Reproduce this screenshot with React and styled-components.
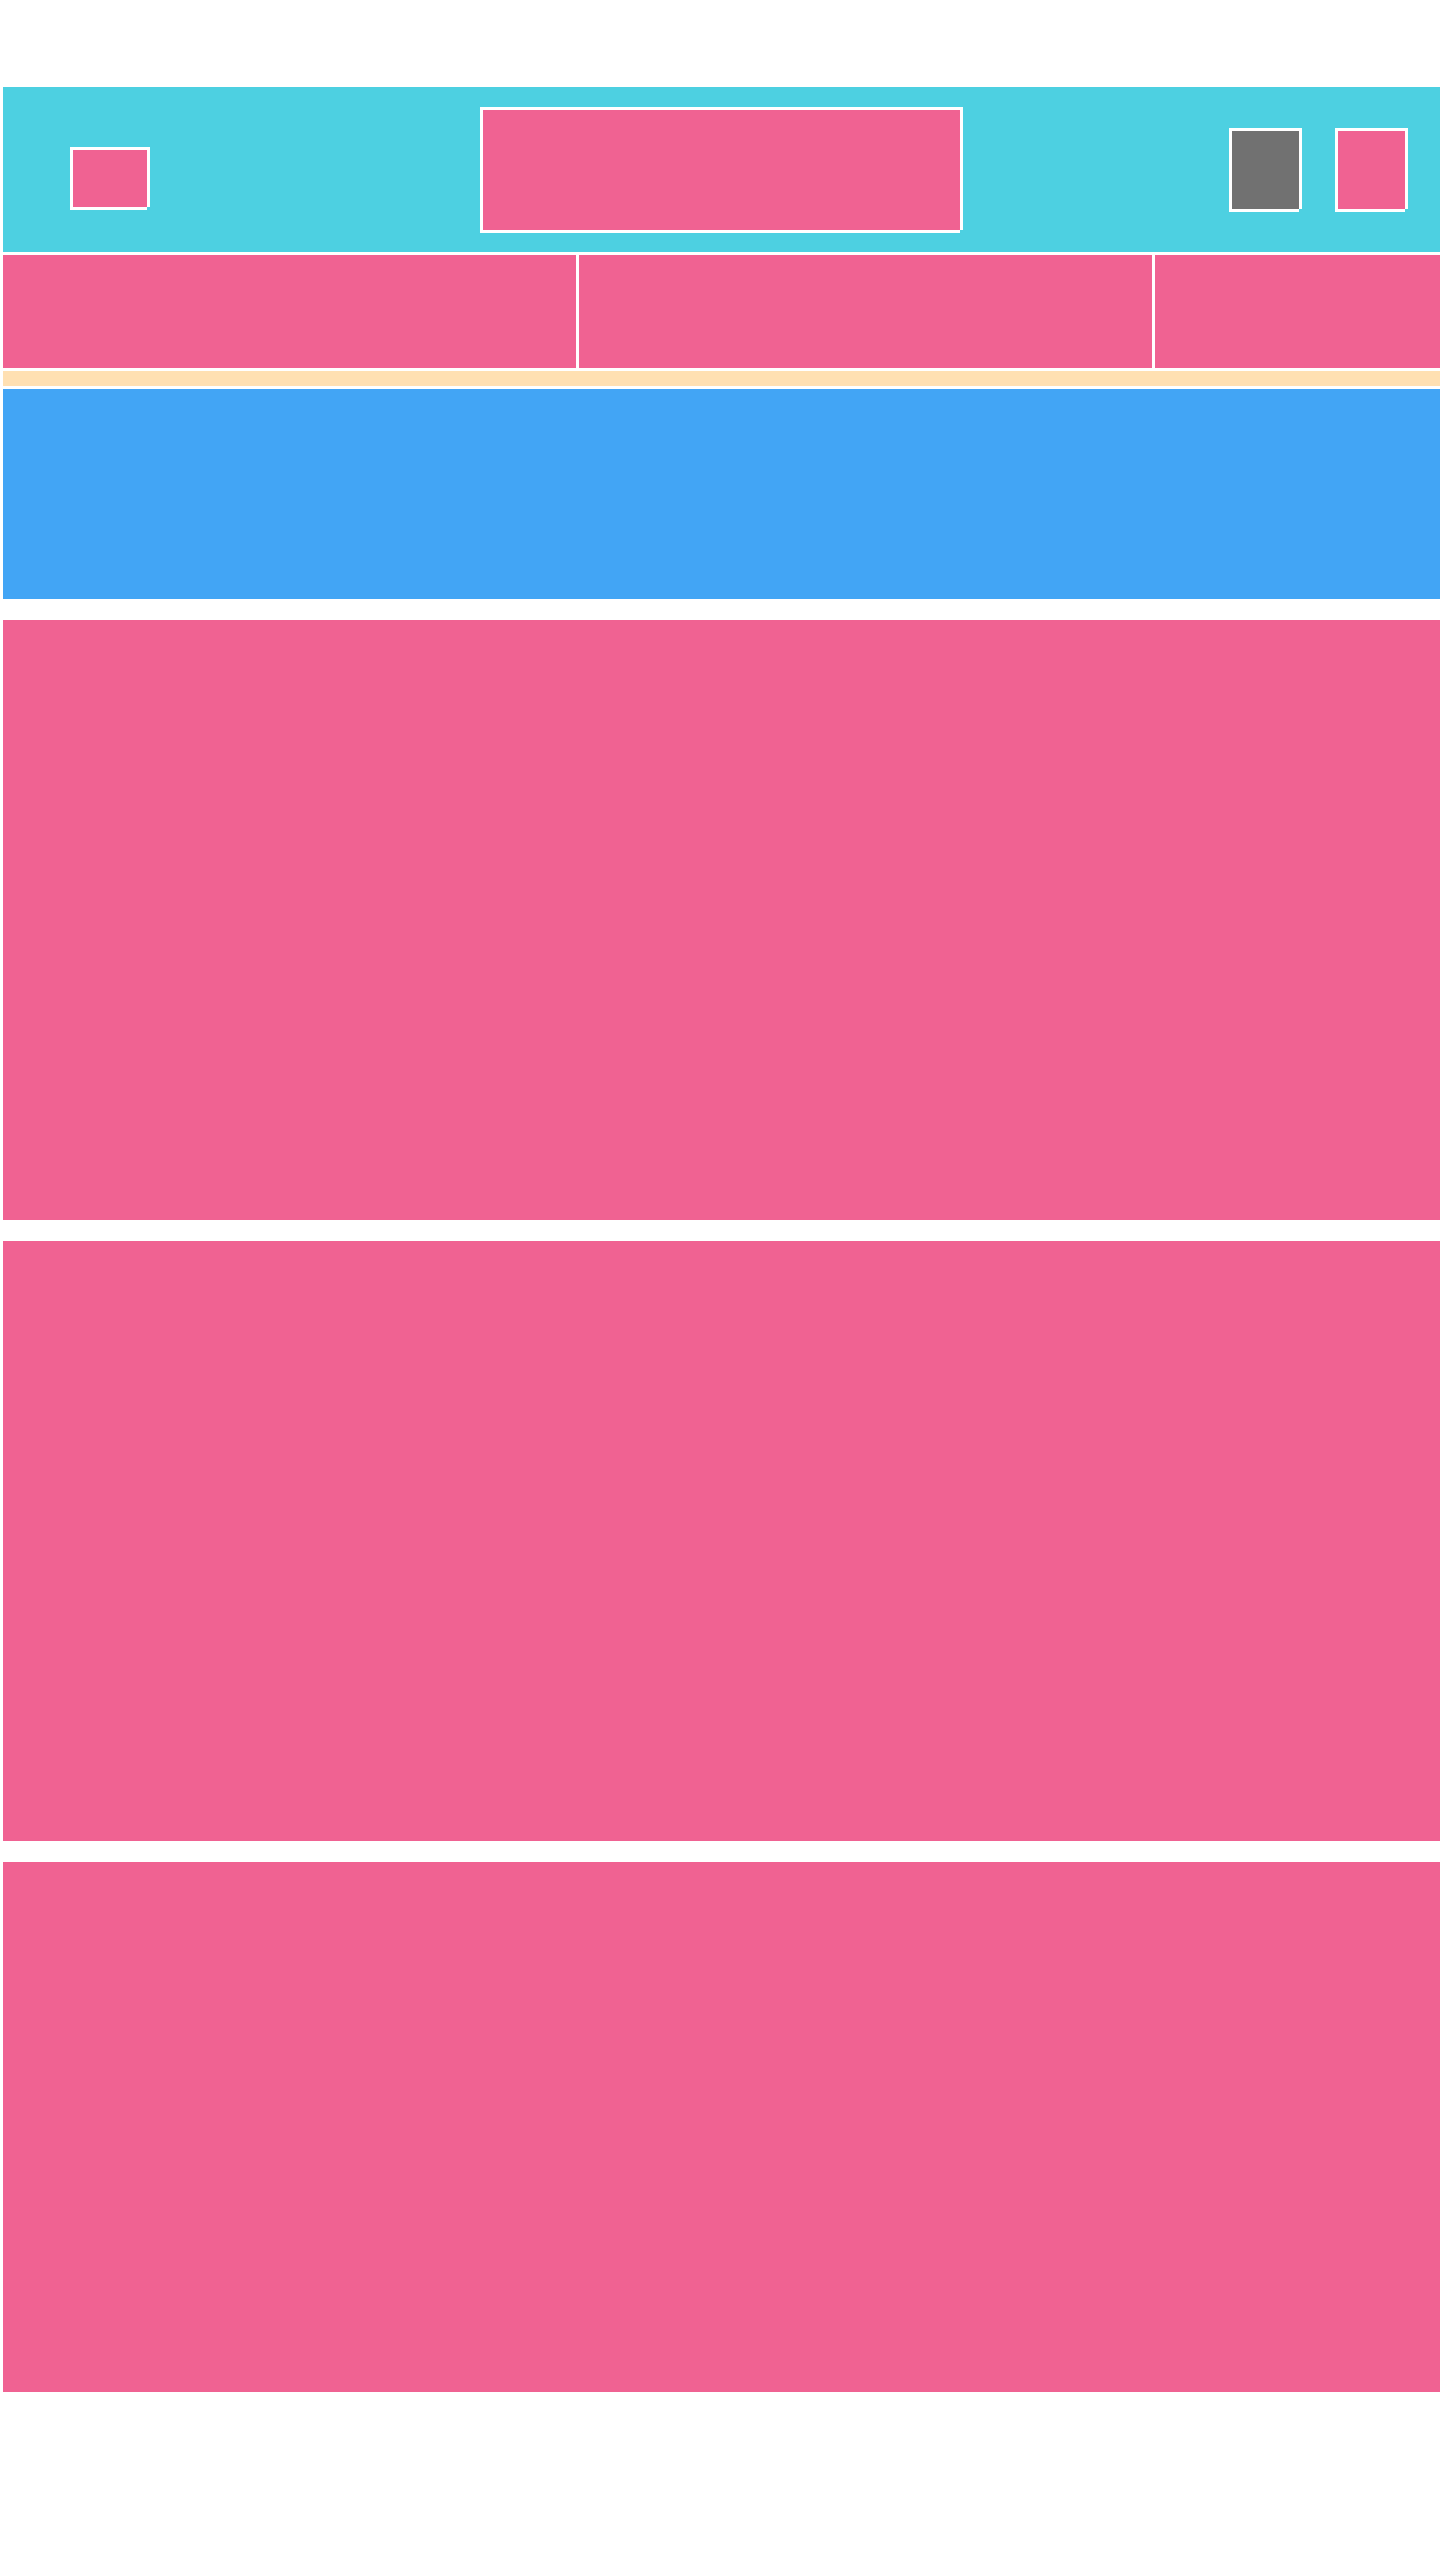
import React from "react";
import styled, { createGlobalStyle } from "styled-components";

const GlobalStyle = createGlobalStyle`
  html, body {
    margin: 0;
    padding: 0;
    background: #ffffff;
    font-family: "Liberation Sans", Arial, sans-serif;
    overflow-x: hidden;
  }
`;

const whiteFrame = `
  box-shadow:
    -3px -3px 0 0 #ffffff,
    3px -3px 0 0 #ffffff,
    -3px 3px 0 0 #ffffff,
    3px 0 0 0 #ffffff,
    0 3px 0 0 #ffffff;
`;

const Page = styled.div`
  width: 1437px;
  padding: 87px 0 0 3px;
  display: flex;
  flex-direction: column;
  overflow: hidden;
`;

const TopBar = styled.header`
  height: 165px;
  background: #4dd0e1;
  display: grid;
  grid-template-columns: 1fr auto 1fr;
  align-items: center;
`;

const Logo = styled.div`
  width: 74px;
  height: 57px;
  margin: 18px 0 0 70px;
  background: #f06292;
  ${whiteFrame}
`;

const SearchBox = styled.div`
  width: 477px;
  height: 120px;
  background: #f06292;
  ${whiteFrame}
`;

const Actions = styled.div`
  justify-self: end;
  display: flex;
  gap: 39px;
  margin-right: 35px;
`;

const IconButton = styled.button`
  width: 67px;
  height: 78px;
  padding: 0;
  border: none;
  background: ${(p) => (p.$muted ? "#717171" : "#f06292")};
  ${whiteFrame}
`;

const NavRow = styled.nav`
  margin-top: 3px;
  height: 113px;
  display: flex;
  gap: 3px;
`;

const NavTab = styled.div`
  flex: 0 0 573px;
  background: #f06292;
`;

const Ribbon = styled.div`
  margin-top: 3px;
  height: 15px;
  background: #ffe0b2;
`;

const Hero = styled.section`
  margin-top: 3px;
  height: 210px;
  background: #42a5f5;
`;

const CardList = styled.main`
  margin-top: 21px;
  display: flex;
  flex-direction: column;
  gap: 21px;
`;

const Card = styled.article`
  height: ${(p) => p.$h}px;
  background: #f06292;
`;

export default function App() {
  return (
    <>
      <GlobalStyle />
      <Page>
        <TopBar>
          <Logo />
          <SearchBox />
          <Actions>
            <IconButton $muted aria-label="profile" />
            <IconButton aria-label="cart" />
          </Actions>
        </TopBar>
        <NavRow>
          <NavTab />
          <NavTab />
          <NavTab />
        </NavRow>
        <Ribbon />
        <Hero />
        <CardList>
          <Card $h={600} />
          <Card $h={600} />
          <Card $h={530} />
        </CardList>
      </Page>
    </>
  );
}
